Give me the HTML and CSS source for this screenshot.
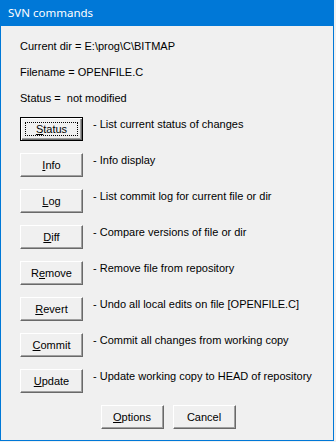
FILE: index.html
```html
<!DOCTYPE html>
<html lang="en">
<head>
  <meta charset="UTF-8">
  <title>SVN commands</title>
  <link rel="stylesheet" href="styles.css">
</head>
<body>
  <div class="window">
    <div class="titlebar">SVN commands</div>
    <div class="content">
      <div class="info">
        <div class="info-line">Current dir = E:\prog\C\BITMAP</div>
        <div class="info-line">Filename = OPENFILE.C</div>
        <div class="info-line">Status =&nbsp; not modified</div>
      </div>

      <div class="commands">
        <div class="cmd">
          <button class="btn default"><u>S</u>tatus</button>
          <span class="desc">- List current status of changes</span>
        </div>
        <div class="cmd">
          <button class="btn"><u>I</u>nfo</button>
          <span class="desc">- Info display</span>
        </div>
        <div class="cmd">
          <button class="btn"><u>L</u>og</button>
          <span class="desc">- List commit log for current file or dir</span>
        </div>
        <div class="cmd">
          <button class="btn"><u>D</u>iff</button>
          <span class="desc">- Compare versions of file or dir</span>
        </div>
        <div class="cmd">
          <button class="btn">R<u>e</u>move</button>
          <span class="desc">- Remove file from repository</span>
        </div>
        <div class="cmd">
          <button class="btn"><u>R</u>evert</button>
          <span class="desc">- Undo all local edits on file [OPENFILE.C]</span>
        </div>
        <div class="cmd">
          <button class="btn"><u>C</u>ommit</button>
          <span class="desc">- Commit all changes from working copy</span>
        </div>
        <div class="cmd">
          <button class="btn"><u>U</u>pdate</button>
          <span class="desc">- Update working copy to HEAD of repository</span>
        </div>
      </div>

      <div class="footer">
        <button class="btn"><u>O</u>ptions</button>
        <button class="btn">Cancel</button>
      </div>
    </div>
  </div>
</body>
</html>
```

FILE: styles.css
```css
body {
    margin: 0;
    background-color: #f0f0f0;
    font-family: "Liberation Sans", Arial, sans-serif;
    font-size: 11px;
    color: #000;
}
.window {
    width: 334px;
    height: 441px;
    box-sizing: border-box;
    border: 1px solid #0078d7;
    border-top: none;
    background-color: #f0f0f0;
    display: flex;
    flex-direction: column;
}
.titlebar {
    height: 26px;
    line-height: 25px;
    background-color: #0078d7;
    color: white;
    font-family: "Noto Sans", sans-serif;
    font-size: 11.5px;
    padding-left: 8px;
    margin: 0 -1px;
}
.content {
    padding: 7px 0 0 19px;
}
.info-line {
    line-height: 26px;
    white-space: nowrap;
}
.commands {
    margin-top: 6px;
    display: flex;
    flex-direction: column;
    gap: 12px;
}
.cmd {
    display: flex;
    align-items: flex-start;
    gap: 10px;
}
.desc {
    line-height: 14px;
    white-space: nowrap;
}
.btn {
    width: 63px;
    height: 24px;
    box-sizing: border-box;
    padding: 0;
    margin: 0;
    font-family: "Liberation Sans", Arial, sans-serif;
    font-size: 11px;
    color: #000;
    background-color: #f0f0f0;
    border: 1px solid;
    border-color: #fff #696969 #696969 #fff;
    box-shadow: inset -1px -1px #a0a0a0;
}
.btn.default {
    border: 1px solid #000;
    box-shadow: inset 1px 1px #fff, inset -1px -1px #696969, inset -2px -2px #a0a0a0;
    outline: 1px dotted #000;
    outline-offset: -6px;
}
.footer {
    margin-top: 12px;
    margin-left: -19px;
    display: flex;
    justify-content: center;
    gap: 9px;
    padding-left: 2px;
}
```
